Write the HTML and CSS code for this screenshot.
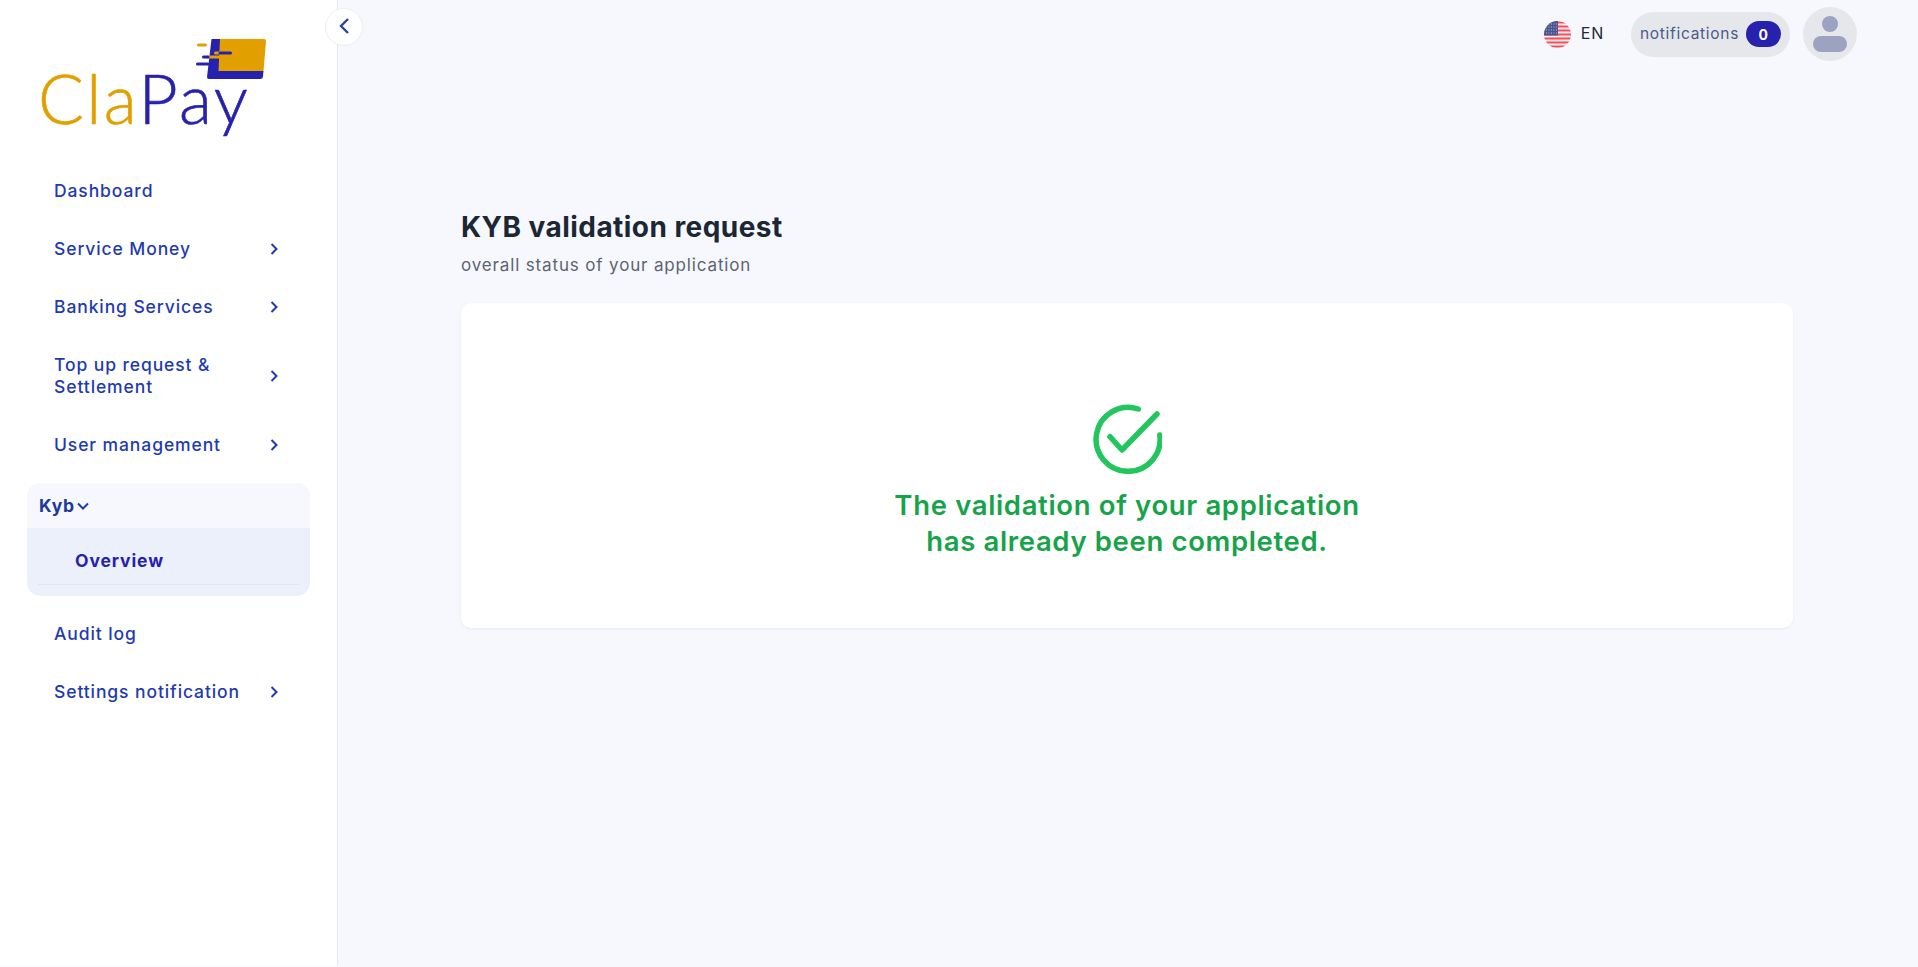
FILE: index.html
```html
<!DOCTYPE html>
<html lang="en">
<head>
    <meta charset="UTF-8">
    <meta name="viewport" content="width=device-width, initial-scale=1.0">
    <title>ClaPay - KYB validation request</title>
    <link rel="stylesheet" href="styles.css">
</head>
<body>
    <aside class="sidebar">
        <div class="logo">
            <svg class="logo-card" width="72" height="42" viewBox="0 0 72 42">
                <path d="M15.500 0H50v32h17.500L67 37a3 3 0 0 1-3 3H13a2 2 0 0 1-2-2z" fill="#2622ad"/>
                <path d="M24 0h44a2 2 0 0 1 2 2l-2.500 30H22.500z" fill="#e2a000"/>
                <path d="M2.500 6h7M19.500 14H24M12 18h12" fill="none" stroke="#e2a000" stroke-width="3" stroke-linecap="round"/>
                <path d="M24 14h10.500M7.500 18H12M1.500 25H12" fill="none" stroke="#2622ad" stroke-width="3" stroke-linecap="round"/>
            </svg>
            <span class="logo-text"><span class="logo-cla">Cla</span><span class="logo-pay">Pay</span></span>
        </div>

        <nav class="menu">
            <a class="menu-item" href="#dashboard">Dashboard</a>
            <a class="menu-item" href="#service-money">Service Money
                <svg class="chevron" width="10" height="14" viewBox="0 0 10 14"><path d="M2.500 2l5 5-5 5"/></svg>
            </a>
            <a class="menu-item" href="#banking">Banking Services
                <svg class="chevron" width="10" height="14" viewBox="0 0 10 14"><path d="M2.500 2l5 5-5 5"/></svg>
            </a>
            <a class="menu-item" href="#topup"><span class="menu-label">Top up request &amp; Settlement</span>
                <svg class="chevron" width="10" height="14" viewBox="0 0 10 14"><path d="M2.500 2l5 5-5 5"/></svg>
            </a>
            <a class="menu-item" href="#users">User management
                <svg class="chevron" width="10" height="14" viewBox="0 0 10 14"><path d="M2.500 2l5 5-5 5"/></svg>
            </a>

            <div class="menu-group">
                <div class="group-head">Kyb
                    <svg class="chevron-down" width="14" height="10" viewBox="0 0 14 10"><path d="M2 2.500l5 5 5-5"/></svg>
                </div>
                <div class="group-body">
                    <a class="sub-item" href="#overview">Overview</a>
                </div>
            </div>

            <a class="menu-item" href="#audit">Audit log</a>
            <a class="menu-item" href="#settings">Settings notification
                <svg class="chevron" width="10" height="14" viewBox="0 0 10 14"><path d="M2.500 2l5 5-5 5"/></svg>
            </a>
        </nav>
    </aside>

    <button class="collapse-btn" type="button" aria-label="Collapse sidebar">
        <svg width="14" height="18" viewBox="0 1 14 18"><path d="M11 2L4 9l7 7"/></svg>
    </button>

    <main class="main">
        <header class="topbar">
            <div class="lang">
                <svg class="flag" width="27" height="27" viewBox="0 0 27 27">
                    <defs><clipPath id="flagClip"><circle cx="13.500" cy="13.500" r="13.500"/></clipPath></defs>
                    <g clip-path="url(#flagClip)">
                        <rect width="27" height="27" fill="#fdeaea"/>
                        <path d="M0 1.500h27M0 5.500h27M0 9.500h27M0 13.500h27M0 17.500h27M0 21.500h27M0 25.500h27" stroke="#f0505f" stroke-width="2"/>
                        <rect width="14" height="14.500" fill="#4a5590"/>
                        <path d="M2 3h11M2 6h11M2 9h11M2 12h11" stroke="#b9bfdc" stroke-width="1" stroke-dasharray="1 1.500"/>
                    </g>
                </svg>
                <span class="bar-label">EN</span>
            </div>
            <div class="notif">
                <span class="bar-label">notifications</span>
                <span class="notif-count">0</span>
            </div>
            <div class="avatar">
                <svg width="36" height="36" viewBox="0 0 36 36">
                    <circle cx="18" cy="8" r="8" fill="#9ca3c1"/>
                    <rect x="1" y="20" width="34" height="16" rx="8" fill="#9ca3c1"/>
                </svg>
            </div>
        </header>

        <section class="content">
            <h1 class="page-title">KYB validation request</h1>
            <p class="page-sub">overall status of your application</p>
            <div class="status-card">
                <svg class="status-icon" width="70" height="70" viewBox="-1 0 70 70">
                    <path class="ring" d="M45.300 5A32 32 0 1 0 66.800 31"/>
                    <path class="tick" d="M17 32.700L29 46 64 10"/>
                </svg>
                <p class="status-text">The validation of your application<br>has already been completed.</p>
            </div>
        </section>
    </main>
</body>
</html>
```
FILE: styles.css
```css
:root {
    --bg-color: #f7f8fd;
    --nav-color: #1f3bb0;
    --brand-blue: #2622ad;
    --brand-gold: #e2a000;
    --grey-pill: #e5e7eb;
}

* {
    margin: 0;
    padding: 0;
    box-sizing: border-box;
}

body {
    display: flex;
    min-height: 100vh;
    font-family: Inter, 'Noto Sans', sans-serif;
    background-color: var(--bg-color);
    color: #1f2937;
    overflow: hidden;
}

a {
    text-decoration: none;
    color: inherit;
}

/* Sidebar */
.sidebar {
    width: 338px;
    flex-shrink: 0;
    margin-bottom: 1px;
    background-color: #fff;
    border-right: 1px solid #e5e7eb;
    padding: 39px 27px 0;
}

.logo {
    display: flex;
    flex-direction: column;
    height: 123px;
    padding-left: 11px;
}

.logo-card {
    align-self: flex-start;
    margin-left: 158px;
}

.logo-text {
    font-family: Lato, sans-serif;
    font-weight: 300;
    font-size: 68px;
    line-height: 44px;
    margin-top: -5px;
    letter-spacing: 2.400px;
    -webkit-text-stroke: 0.6px;
}

.logo-cla {
    color: var(--brand-gold);
}

.logo-pay {
    color: var(--brand-blue);
}

.menu-item {
    display: flex;
    align-items: center;
    justify-content: space-between;
    padding: 18px 31px 18px 27px;
    font-size: 17.500px;
    font-weight: 500;
    line-height: 22px;
    letter-spacing: 0.9px;
    color: var(--nav-color);
}

.menu-label {
    width: 190px;
}

.chevron,
.chevron-down {
    fill: none;
    stroke: var(--nav-color);
    stroke-width: 2;
}

.menu-group {
    margin: 9px 0;
    border-radius: 14px;
    overflow: hidden;
    background-color: #ecf0fb;
}

.group-head {
    display: flex;
    align-items: center;
    gap: 1px;
    height: 45px;
    padding-left: 12px;
    background-color: #f7f8fd;
    font-size: 17.500px;
    font-weight: 700;
    letter-spacing: 0.8px;
    color: #1e3a9f;
}

.group-body {
    height: 68px;
    padding: 0 11px;
}

.sub-item {
    display: flex;
    align-items: center;
    height: 57px;
    padding: 8px 0 0 37px;
    border-bottom: 1px solid #e3e5ec;
    font-size: 17.500px;
    font-weight: 700;
    letter-spacing: 0.9px;
    color: var(--brand-blue);
}

/* Collapse button sits over the sidebar edge */
.collapse-btn {
    position: absolute;
    top: 8px;
    left: 325px;
    width: 38px;
    height: 38px;
    display: flex;
    align-items: center;
    justify-content: center;
    background-color: #fff;
    border: 1px solid #eceef3;
    border-radius: 50%;
    cursor: pointer;
}

.collapse-btn path {
    fill: none;
    stroke: #2b4a86;
    stroke-width: 2.400;
}

/* Main */
.main {
    flex: 1;
    min-width: 0;
}

.topbar {
    display: flex;
    align-items: center;
    justify-content: flex-end;
    height: 68px;
    padding-right: 61px;
}

.bar-label {
    padding-bottom: 2px;
}

.lang {
    display: flex;
    align-items: center;
    gap: 10px;
    margin-right: 27px;
    font-size: 16px;
    font-weight: 400;
    letter-spacing: 0.8px;
}

.flag {
    display: block;
}

.notif {
    display: flex;
    align-items: center;
    justify-content: space-between;
    width: 159px;
    height: 45px;
    padding: 0 9px;
    margin-right: 13px;
    background-color: var(--grey-pill);
    border-radius: 23px;
    font-size: 15.500px;
    letter-spacing: 0.7px;
    color: #4b5a8c;
}

.notif-count {
    display: flex;
    align-items: center;
    justify-content: center;
    width: 35px;
    height: 26px;
    background-color: var(--brand-blue);
    border-radius: 13px;
    font-size: 14px;
    font-weight: 700;
    color: #fff;
}

.avatar {
    display: flex;
    align-items: center;
    justify-content: center;
    width: 54px;
    height: 54px;
    background-color: var(--grey-pill);
    border-radius: 50%;
}

.content {
    width: 1332px;
    margin-left: 123px;
    padding-top: 141px;
}

.page-title {
    font-size: 28px;
    font-weight: 700;
    line-height: 36px;
    letter-spacing: 0.45px;
    color: #1c2735;
}

.page-sub {
    margin-top: 9px;
    font-size: 17px;
    line-height: 22px;
    letter-spacing: 0.85px;
    color: #5b6472;
}

.status-card {
    display: flex;
    flex-direction: column;
    align-items: center;
    height: 325px;
    margin-top: 27px;
    padding-top: 101px;
    background-color: #fff;
    border-radius: 10px;
    box-shadow: 0 1px 3px rgba(0, 0, 0, 0.06);
}

.status-icon {
    display: block;
}

.ring,
.tick {
    fill: none;
    stroke: #22c55e;
    stroke-width: 5.500;
    stroke-linecap: round;
    stroke-linejoin: round;
}

.status-text {
    margin-top: 13px;
    font-size: 27.500px;
    font-weight: 600;
    line-height: 36px;
    letter-spacing: 0.65px;
    text-align: center;
    color: #16a34a;
}
```
